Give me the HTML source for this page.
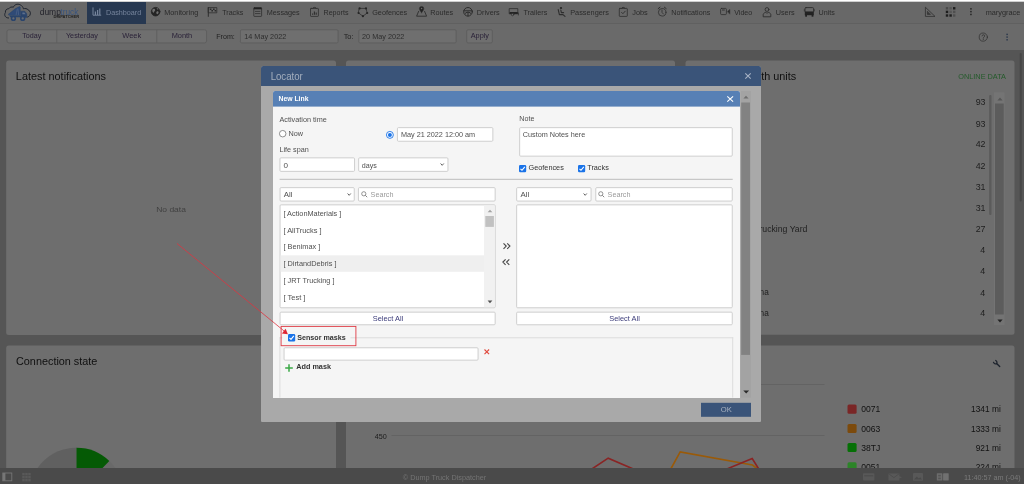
<!DOCTYPE html>
<html lang="en">
<head>
<meta charset="utf-8">
<title>Dump Truck Dispatcher - Locator - New Link</title>
<style>
html,body{margin:0;padding:0;overflow:hidden;}
body{width:1024px;height:484px;overflow:hidden;position:relative;background:#555555;font-family:"Liberation Sans",sans-serif;}
.a{position:absolute;box-sizing:border-box;}
.t{position:absolute;white-space:nowrap;line-height:1;}
.panel{background:#6e6e6e;border-radius:2.5px;}
.tin{background:#6f6f6f;border:1px solid #5c5c5c;border-radius:1.5px;}
.in{background:#fff;border:1px solid #cfcfcf;border-radius:1.5px;}
svg{position:absolute;overflow:visible;}
svg.txt{will-change:transform;}
</style>
</head>
<body>
<!-- page chrome (dimmed) -->
<svg style="left:-1px;top:-1px" width="1026" height="3"><rect x="1.00" y="1.00" width="1024.00" height="1.00" fill="#fff"/></svg>
<svg style="left:-1px;top:0px" width="1026" height="3"><rect x="1.00" y="1.00" width="1024.00" height="1.00" fill="#cfcfcf"/></svg>
<div class="a" id="topbar" style="left:0;top:2px;width:1024px;height:22px;background:#686868;border-bottom:1px solid #606060"></div>
<div class="a" id="tab" style="left:87px;top:2px;width:59px;height:21.5px;background:#273851"></div>
<div class="a" id="toolbar" style="left:0;top:24px;width:1024px;height:25.6px;background:#6a6a6a"></div>
<svg style="left:5px;top:28px" width="203" height="17"><rect x="1.95" y="1.75" width="199.60" height="13.20" rx="2.00" fill="#6f6f6f" stroke="#5c5c5c" stroke-width="0.9"/></svg>
<svg style="left:55px;top:28px" width="4" height="16"><rect x="1.40" y="1.80" width="0.80" height="13.00" fill="#5c5c5c"/></svg>
<svg style="left:105px;top:28px" width="4" height="16"><rect x="1.40" y="1.80" width="0.80" height="13.00" fill="#5c5c5c"/></svg>
<svg style="left:155px;top:28px" width="4" height="16"><rect x="1.40" y="1.80" width="0.80" height="13.00" fill="#5c5c5c"/></svg>
<svg style="left:239px;top:28px" width="101" height="17"><rect x="1.45" y="1.75" width="97.60" height="13.20" rx="1.20" fill="#6f6f6f" stroke="#5c5c5c" stroke-width="0.9"/></svg>
<svg style="left:357px;top:28px" width="101" height="17"><rect x="1.85" y="1.75" width="97.30" height="13.20" rx="1.20" fill="#6f6f6f" stroke="#5c5c5c" stroke-width="0.9"/></svg>
<svg style="left:465px;top:28px" width="29" height="17"><rect x="1.70" y="1.75" width="25.60" height="13.20" rx="1.20" fill="#6f6f6f" stroke="#5c5c5c" stroke-width="0.9"/></svg>
<!-- nav icons -->
<svg style="left:0;top:0" width="1024" height="52" viewBox="0 0 1024 52" fill="none" stroke="#2e2e2e" stroke-width="0.8" stroke-linejoin="round" stroke-linecap="round">
 <!-- logo: cloud + dump truck -->
 <path d="M8.6 18 C5.6 18.2 3.6 15.2 5.4 12.6 C5 10.2 6.8 8.6 8.6 8.8 C9.6 7.2 11.8 6.6 13.4 7.2 C14.2 4.6 17.6 3.4 20.2 4.8 C22.2 5.8 23.2 7.4 23.4 8.8 C25 8.2 27.2 8.6 28 9.8 C30.4 10.6 31 13.6 29.8 15.4 C29.2 16.4 28.4 16.8 27.6 17" stroke="#20252f" stroke-width="1"/>
 <path d="M8.4 14.3 L15.6 8.6 L19.6 6.6 L20.2 7 L20.2 15.6 L10.2 15.6 Z" fill="#2f4a76" stroke="#2a446c" stroke-width="0.6"/>
 <path d="M17.2 9 L16.2 14.6 M18 9 L18.6 14.6" stroke="#5a6f90" stroke-width="0.5"/>
 <path d="M20.8 11.2 L24.8 11.2 L26.8 13.8 L26.8 17.4 L20.8 17.4 Z" fill="#2a446c" stroke="#2a446c" stroke-width="0.5"/>
 <path d="M22.4 12.4 L24.4 12.4 L25.6 14.2 L22.4 14.2 Z" fill="#5d6f8c" stroke="none"/>
 <path d="M10.4 16.6 H21" stroke="#2a446c" stroke-width="1.4"/>
 <circle cx="13.4" cy="18.4" r="1.9" fill="#676c74" stroke="#2a446c" stroke-width="1.5"/>
 <circle cx="22.7" cy="18.4" r="1.9" fill="#676c74" stroke="#2a446c" stroke-width="1.5"/>
 <!-- dashboard -->
 <g stroke="#76849c" stroke-width="1">
  <path d="M93 7.8 V15.2 H100.8"/>
  <path d="M95.4 15 V11.6 M97.6 15 V10 M99.8 15 V8.4" stroke-width="1.2" stroke-linecap="butt"/>
 </g>
 <!-- monitoring globe -->
 <circle cx="155.6" cy="11.7" r="4.3" fill="#242424" stroke="#242424" stroke-width="0.8"/>
 <path d="M152.6 9.2 C153.6 8.2 155 8.6 155.2 9.8 C155.4 10.8 154.2 11.2 154 12.2 C153.6 13.2 152.8 12.6 152.4 11.6 C152.2 10.8 152.2 9.8 152.6 9.2 Z M156.8 11.6 C157.8 11 158.8 11.6 158.6 12.8 C158.2 14 157.2 14.6 156.6 13.8 C156.2 13 156.2 12.2 156.8 11.6 Z M156.6 8.2 C157.4 8 158.2 8.6 158.4 9.4 C157.8 9.8 156.8 9.4 156.6 8.2Z" fill="#707070" stroke="none"/>
 <!-- tracks flag -->
 <path d="M208.3 7.4 V16.4" stroke-width="1"/>
 <rect x="208.6" y="7.6" width="8.2" height="5.2" stroke-width="0.8"/>
 <path d="M209.8 8.4 h1.6 v1.6 h-1.6z M213 8.4 h1.6 v1.6 h-1.6z M211.4 10 h1.6 v1.6 h-1.6z M214.6 10 h1.6 v1.6 h-1.6z" fill="#2a2a2a" stroke="none"/>
 <!-- messages -->
 <rect x="253.8" y="7.6" width="7.8" height="8.8" rx="0.6"/>
 <rect x="253.8" y="7.6" width="7.8" height="1.7" fill="#222" stroke="none"/>
 <path d="M255.4 11.4 H260 M255.4 13.6 H260" stroke-width="0.8"/>
 <!-- reports -->
 <rect x="310.5" y="8.4" width="7.9" height="8" rx="0.6"/>
 <path d="M312.8 8.2 C312.8 7 316.2 7 316.2 8.2" stroke-width="1"/>
 <path d="M312.6 14.8 V13.4 M314.4 14.8 V11.4 M316.2 14.8 V12.6" stroke-width="1.1" stroke-linecap="butt"/>
 <!-- geofences -->
 <path d="M359.6 8.4 L366 8.4 L367.2 13 L362.9 16.2 L358.6 13 Z" stroke-width="0.8"/>
 <g fill="#262626" stroke="none"><circle cx="359.6" cy="8.4" r="1.1"/><circle cx="366" cy="8.4" r="1.1"/><circle cx="367.2" cy="13" r="1.1"/><circle cx="362.9" cy="16.2" r="1.1"/><circle cx="358.6" cy="13" r="1.1"/></g>
 <!-- routes -->
 <path d="M418.6 11.4 L416.6 16.2 H426.6 L424.6 11.4" stroke-width="0.9"/>
 <path d="M421.6 12.8 C420.4 11 419.4 10 419.4 8.6 A2.2 2.2 0 0 1 423.8 8.6 C423.8 10 422.8 11 421.6 12.8 Z" fill="#242424" stroke-width="0.5"/>
 <circle cx="421.6" cy="8.5" r="0.8" fill="#6c6c6c" stroke="none"/>
 <!-- drivers -->
 <circle cx="468" cy="11.8" r="4.3" stroke-width="1"/>
 <path d="M463.8 10.8 H472.2 M465.2 13.4 L467 12.2 H469 L470.8 13.4 M468 12.4 V16" stroke-width="1"/>
 <!-- trailers -->
 <path d="M509.6 8.6 H517.8 V13.8 H509.6 Z" stroke-width="0.8"/>
 <path d="M509.6 12 H517.8 V14 H509.6 Z" fill="#242424" stroke="none"/>
 <path d="M518.4 13 V15" stroke-width="0.8"/>
 <circle cx="512.6" cy="14.6" r="1.2" fill="#6c6c6c" stroke-width="0.7"/>
 <!-- passengers -->
 <circle cx="561" cy="8" r="1.1" fill="#242424" stroke="none"/>
 <path d="M558.2 9.6 L559.4 14.6 H563 L565 16.4 M560.8 10 L561.4 12.6 H563.6" stroke-width="1.1"/>
 <!-- jobs -->
 <rect x="619.3" y="8.4" width="8" height="8" rx="0.6"/>
 <path d="M621.6 8.2 C621.6 7 625 7 625 8.2" stroke-width="1"/>
 <path d="M621.6 12.4 L622.9 13.7 L625.2 11.2" stroke-width="0.9"/>
 <!-- notifications alarm clock -->
 <circle cx="662.2" cy="12.3" r="3.8" stroke-width="0.8"/>
 <path d="M658.2 8.6 L660 7.2 M666.2 8.6 L664.4 7.2" stroke-width="1"/>
 <path d="M662 10 V12.4 L663.4 14" stroke-width="0.8"/>
 <!-- video -->
 <rect x="720.6" y="8.4" width="5.8" height="6.2" rx="1"/>
 <path d="M722.4 10 H724.4" stroke-width="0.9"/>
 <path d="M727.6 11.4 L729.8 9.4 V13.8 Z" fill="#2a2a2a" stroke-width="0.5"/>
 <!-- users -->
 <circle cx="767" cy="9.5" r="1.9" stroke-width="0.9"/>
 <path d="M763.2 16.4 V14.6 C763.2 13.2 765 12.6 765.8 12.2 L767 13.4 L768.2 12.2 C769 12.6 770.8 13.2 770.8 14.6 V16.4 Z" stroke-width="0.9"/>
 <!-- units bus -->
 <rect x="805" y="7.6" width="8.6" height="4.6" rx="1" stroke-width="0.9"/>
 <rect x="804.8" y="11.6" width="9" height="3.6" fill="#222" stroke="none"/>
 <rect x="805.2" y="14.8" width="1.8" height="1.9" fill="#222" stroke="none"/><rect x="811.6" y="14.8" width="1.8" height="1.9" fill="#222" stroke="none"/>
 <path d="M804.3 9.6 V11 M814.3 9.6 V11" stroke-width="0.7"/>
 <!-- ruler triangle -->
 <path d="M925.4 7.6 V16.4 H934.6 Z" stroke-width="0.8"/>
 <path d="M927.4 11.6 V14.4 H930.2 Z" stroke-width="0.6" fill="#3a3a3a"/>
 <!-- apps grid -->
 <g fill="#1e1e1e" stroke="none">
  <rect x="945.8" y="7.1" width="2.4" height="2.4" fill="#4a4a4a"/><rect x="949.4" y="7.1" width="2.4" height="2.4" fill="#555"/><rect x="953" y="7.1" width="2.4" height="2.4"/>
  <rect x="945.8" y="10.7" width="2.4" height="2.4"/><rect x="949.4" y="10.7" width="2.4" height="2.4" fill="#555"/><rect x="953" y="10.7" width="2.4" height="2.4" fill="#4f4f4f"/>
  <rect x="945.8" y="14.3" width="2.4" height="2.4"/><rect x="949.4" y="14.3" width="2.4" height="2.4"/><rect x="953" y="14.3" width="2.4" height="2.4" fill="#4f4f4f"/>
 </g>
 <!-- kebab menus -->
 <g fill="#242424" stroke="none"><rect x="970.2" y="8.1" width="1.5" height="1.5"/><rect x="970.2" y="10.9" width="1.5" height="1.5"/><rect x="970.2" y="13.7" width="1.5" height="1.5"/></g>
 <g fill="#263449" stroke="none"><rect x="1006.4" y="33.7" width="1.4" height="1.4"/><rect x="1006.4" y="36.4" width="1.4" height="1.4"/><rect x="1006.4" y="39.1" width="1.4" height="1.4"/></g>
 <!-- help -->
 <circle cx="983.3" cy="37.1" r="4.1" stroke-width="0.7" stroke="#2e2e2e"/>
 <path d="M982 35.9 C982 34.4 984.7 34.4 984.7 35.9 C984.7 36.9 983.3 36.9 983.3 38.1 M983.3 39.2 V39.5" stroke-width="0.8" stroke="#2e2e2e"/>
</svg>

<!-- dashboard panels -->
<svg style="left:5px;top:59px" width="332" height="277"><rect x="1.20" y="1.50" width="329.80" height="274.50" rx="2.50" fill="#6e6e6e"/></svg>
<svg style="left:345px;top:59px" width="331" height="277"><rect x="1.00" y="1.50" width="329.00" height="274.50" rx="2.50" fill="#6e6e6e"/></svg>
<svg style="left:684px;top:59px" width="332" height="277"><rect x="1.50" y="1.50" width="329.00" height="274.20" rx="2.50" fill="#6e6e6e"/></svg>
<svg style="left:5px;top:344px" width="332" height="163"><rect x="1.20" y="1.40" width="329.80" height="160.00" rx="2.50" fill="#6e6e6e"/></svg>
<svg style="left:345px;top:344px" width="671" height="163"><rect x="1.00" y="1.40" width="668.50" height="160.00" rx="2.50" fill="#6e6e6e"/></svg>
<svg style="left:1018px;top:52px" width="5" height="151"><rect x="1.70" y="1.00" width="2.00" height="148.50" rx="1.00" fill="#474747"/></svg>
<!-- geofence list widgets -->
<svg style="left:988px;top:94px" width="5" height="122"><rect x="1.10" y="1.00" width="2.40" height="120.00" rx="1.00" fill="#5b5b5b"/></svg>
<svg style="left:993px;top:91px" width="13" height="236"><rect x="1.00" y="1.30" width="10.50" height="232.80" fill="#747474"/></svg>
<svg style="left:994px;top:102px" width="11" height="214"><rect x="1.00" y="1.50" width="8.70" height="211.00" fill="#5c5c5c"/></svg>
<svg style="left:996.5px;top:96.5px" width="6" height="4" viewBox="0 0 6 4"><path d="M0.4 3.4 L3 0.6 L5.6 3.4Z" fill="#565656"/></svg>
<svg style="left:996.5px;top:318.7px" width="6" height="4" viewBox="0 0 6 4"><path d="M0.4 0.6 L3 3.4 L5.6 0.6Z" fill="#222"/></svg>
<!-- chart -->
<svg style="left:390px;top:383px" width="436" height="3"><rect x="1.50" y="1.00" width="433.00" height="1.00" fill="#636363"/></svg>
<svg style="left:390px;top:434px" width="436" height="3"><rect x="1.50" y="1.00" width="433.00" height="1.00" fill="#636363"/></svg>
<svg style="left:0;top:0" width="1024" height="484" viewBox="0 0 1024 484">
 <polyline points="578.3,478 608.2,458.2 654.3,478" fill="none" stroke="#8a2424" stroke-width="1.6"/>
 <polyline points="664.7,480 680.2,451.9 752.5,465 769,478" fill="none" stroke="#9a5a08" stroke-width="1.6"/>
 <polyline points="705.1,478 752.2,458.6 764.4,478" fill="none" stroke="#8a2424" stroke-width="1.6"/>
 <!-- wrench -->
 <path d="M999.7 366.5 L996.6 363.6" stroke="#1e242e" stroke-width="1.4" stroke-linecap="round" fill="none"/>
 <path d="M993.5 362.3 C994 363.6 995.4 364.3 996.6 363.7 C997.4 362.6 996.9 361.2 995.7 360.5" stroke="#1e242e" stroke-width="1.25" fill="none" stroke-linecap="round"/>
 <!-- donut -->
 <circle cx="76.5" cy="494.9" r="47.2" fill="#696969"/>
 <path d="M76.5 494.9 L76.5 447.7 A47.2 47.2 0 0 0 29.3 494.9Z" fill="#606060"/>
 <path d="M76.5 494.9 L76.5 447.7 A47.2 47.2 0 0 1 109.3 460.95Z" fill="#055a05"/>
</svg>
<!-- legend squares -->
<svg style="left:846px;top:403px" width="12" height="12"><rect x="1.50" y="1.60" width="9.10" height="9.10" rx="1.50" fill="#7a2626"/></svg>
<svg style="left:846px;top:422px" width="12" height="12"><rect x="1.50" y="1.90" width="9.10" height="9.10" rx="1.50" fill="#7c4a0c"/></svg>
<svg style="left:846px;top:442px" width="12" height="12"><rect x="1.50" y="1.00" width="9.10" height="9.10" rx="1.50" fill="#067006"/></svg>
<svg style="left:846px;top:461px" width="12" height="12"><rect x="1.50" y="1.20" width="9.10" height="9.10" rx="1.50" fill="#2c8428"/></svg>
<svg class="txt" style="left:0;top:0" width="1024" height="484" viewBox="0 0 1024 484" font-family="'Liberation Sans', sans-serif">
<text id="n0" y="15.00" font-size="7.60" fill="#76849c" x="105.98" textLength="35.28" lengthAdjust="spacingAndGlyphs">Dashboard</text>
<text id="n1" y="15.00" font-size="7.60" fill="#2b2b2b" x="164.23" textLength="34.03" lengthAdjust="spacingAndGlyphs">Monitoring</text>
<text id="n2" y="15.00" font-size="7.60" fill="#2b2b2b" x="222.23" textLength="21.03" lengthAdjust="spacingAndGlyphs">Tracks</text>
<text id="n3" y="15.00" font-size="7.60" fill="#2b2b2b" x="266.73" textLength="33.03" lengthAdjust="spacingAndGlyphs">Messages</text>
<text id="n4" y="15.00" font-size="7.60" fill="#2b2b2b" x="323.48" textLength="25.03" lengthAdjust="spacingAndGlyphs">Reports</text>
<text id="n5" y="15.00" font-size="7.60" fill="#2b2b2b" x="372.23" textLength="35.03" lengthAdjust="spacingAndGlyphs">Geofences</text>
<text id="n6" y="15.00" font-size="7.60" fill="#2b2b2b" x="430.23" textLength="23.03" lengthAdjust="spacingAndGlyphs">Routes</text>
<text id="n7" y="15.00" font-size="7.60" fill="#2b2b2b" x="476.73" textLength="23.03" lengthAdjust="spacingAndGlyphs">Drivers</text>
<text id="n8" y="15.00" font-size="7.60" fill="#2b2b2b" x="523.48" textLength="23.78" lengthAdjust="spacingAndGlyphs">Trailers</text>
<text id="n9" y="15.00" font-size="7.60" fill="#2b2b2b" x="570.23" textLength="38.78" lengthAdjust="spacingAndGlyphs">Passengers</text>
<text id="n10" y="15.00" font-size="7.60" fill="#2b2b2b" x="632.23" textLength="15.53" lengthAdjust="spacingAndGlyphs">Jobs</text>
<text id="n11" y="15.00" font-size="7.60" fill="#2b2b2b" x="671.23" textLength="39.03" lengthAdjust="spacingAndGlyphs">Notifications</text>
<text id="n12" y="15.00" font-size="7.60" fill="#2b2b2b" x="734.23" textLength="18.03" lengthAdjust="spacingAndGlyphs">Video</text>
<text id="n13" y="15.00" font-size="7.60" fill="#2b2b2b" x="775.73" textLength="19.03" lengthAdjust="spacingAndGlyphs">Users</text>
<text id="n14" y="15.00" font-size="7.60" fill="#2b2b2b" x="818.48" textLength="16.28" lengthAdjust="spacingAndGlyphs">Units</text>
<text id="n15" y="15.00" font-size="7.60" fill="#2b2b2b" x="985.73" textLength="34.53" lengthAdjust="spacingAndGlyphs">marygrace</text>
<text id="lg1" y="14.50" font-size="8.60" fill="#24242c" x="39.70" textLength="21.20" lengthAdjust="spacingAndGlyphs">dump</text>
<text id="lg2" y="14.50" font-size="8.60" fill="#38547f" x="60.30" textLength="18.20" lengthAdjust="spacingAndGlyphs">truck</text>
<text id="lg3" y="18.40" font-size="3.70" fill="#1c1c1c" font-weight="700" x="53.47" textLength="25.66" lengthAdjust="spacingAndGlyphs">DISPATCHER</text>
<text id="b0" y="37.75" font-size="7.80" fill="#2a2238" x="22.23" textLength="19.05" lengthAdjust="spacingAndGlyphs">Today</text>
<text id="b1" y="37.75" font-size="7.80" fill="#2a2238" x="65.98" textLength="31.80" lengthAdjust="spacingAndGlyphs">Yesterday</text>
<text id="b2" y="37.75" font-size="7.80" fill="#2a2238" x="122.23" textLength="19.05" lengthAdjust="spacingAndGlyphs">Week</text>
<text id="b3" y="37.75" font-size="7.80" fill="#2a2238" x="171.63" textLength="20.55" lengthAdjust="spacingAndGlyphs">Month</text>
<text id="b4" y="38.60" font-size="7.80" fill="#222" x="216.23" textLength="18.55" lengthAdjust="spacingAndGlyphs">From:</text>
<text id="b5" y="38.60" font-size="7.80" fill="#2e2e2e" x="244.23" textLength="42.05" lengthAdjust="spacingAndGlyphs">14 May 2022</text>
<text id="b6" y="38.60" font-size="7.80" fill="#222" x="343.63" textLength="9.95" lengthAdjust="spacingAndGlyphs">To:</text>
<text id="b7" y="38.60" font-size="7.80" fill="#2e2e2e" x="362.03" textLength="42.25" lengthAdjust="spacingAndGlyphs">20 May 2022</text>
<text id="b8" y="37.75" font-size="7.80" fill="#2a2238" x="470.73" textLength="18.30" lengthAdjust="spacingAndGlyphs">Apply</text>
<text id="p1" y="79.75" font-size="10.80" fill="#101010" x="15.87" textLength="90.11" lengthAdjust="spacingAndGlyphs">Latest notifications</text>
<text id="p1n" y="211.60" font-size="7.90" fill="#414141" x="156.22" textLength="29.65" lengthAdjust="spacingAndGlyphs">No data</text>
<text id="p3" y="79.75" font-size="10.80" fill="#101010" x="695.37" textLength="100.81" lengthAdjust="spacingAndGlyphs">Geofences with units</text>
<text id="p3o" y="78.75" font-size="7.40" fill="#235a2a" x="958.24" textLength="47.77" lengthAdjust="spacingAndGlyphs">ONLINE DATA</text>
<text id="p4" y="364.80" font-size="10.80" fill="#101010" x="16.02" textLength="81.36" lengthAdjust="spacingAndGlyphs">Connection state</text>
<text id="g0" y="105.00" font-size="8.90" fill="#1e1e1e" x="975.69" textLength="9.87" lengthAdjust="spacingAndGlyphs">93</text>
<text id="g1" y="126.60" font-size="8.90" fill="#1e1e1e" x="975.69" textLength="9.87" lengthAdjust="spacingAndGlyphs">93</text>
<text id="g2" y="147.40" font-size="8.90" fill="#1e1e1e" x="975.69" textLength="9.87" lengthAdjust="spacingAndGlyphs">42</text>
<text id="g3" y="168.50" font-size="8.90" fill="#1e1e1e" x="975.69" textLength="9.87" lengthAdjust="spacingAndGlyphs">42</text>
<text id="g4" y="189.50" font-size="8.90" fill="#1e1e1e" x="975.69" textLength="9.87" lengthAdjust="spacingAndGlyphs">31</text>
<text id="g5" y="210.90" font-size="8.90" fill="#1e1e1e" x="975.69" textLength="9.87" lengthAdjust="spacingAndGlyphs">31</text>
<text id="g6" y="231.90" font-size="8.90" fill="#1e1e1e" x="975.69" textLength="9.87" lengthAdjust="spacingAndGlyphs">27</text>
<text id="g7" y="252.90" font-size="8.90" fill="#1e1e1e" x="980.34">4</text>
<text id="g8" y="274.40" font-size="8.90" fill="#1e1e1e" x="980.34">4</text>
<text id="g9" y="295.50" font-size="8.90" fill="#1e1e1e" x="980.34">4</text>
<text id="g10" y="316.40" font-size="8.90" fill="#1e1e1e" x="980.34">4</text>
<text id="gy" y="231.90" font-size="8.70" fill="#222" x="807.40" text-anchor="end" textLength="70.83" lengthAdjust="spacingAndGlyphs">JRT Trucking Yard</text>
<text id="gn1" y="295.10" font-size="8.70" fill="#222" x="768.80" text-anchor="end" textLength="25.23" lengthAdjust="spacingAndGlyphs">Marina</text>
<text id="gn2" y="316.10" font-size="8.70" fill="#222" x="768.80" text-anchor="end" textLength="25.23" lengthAdjust="spacingAndGlyphs">Marina</text>
<text id="c450" y="438.70" font-size="7.60" fill="#1c1c1c" x="374.63" textLength="12.03" lengthAdjust="spacingAndGlyphs">450</text>
<text id="la0" y="412.10" font-size="8.80" fill="#121212" x="861.29" textLength="19.02" lengthAdjust="spacingAndGlyphs">0071</text>
<text id="lb0" y="412.10" font-size="8.80" fill="#121212" x="1000.81" text-anchor="end" textLength="29.73" lengthAdjust="spacingAndGlyphs">1341 mi</text>
<text id="la1" y="431.50" font-size="8.80" fill="#121212" x="861.29" textLength="19.02" lengthAdjust="spacingAndGlyphs">0063</text>
<text id="lb1" y="431.50" font-size="8.80" fill="#121212" x="1000.81" text-anchor="end" textLength="29.73" lengthAdjust="spacingAndGlyphs">1333 mi</text>
<text id="la2" y="450.50" font-size="8.80" fill="#121212" x="861.29" textLength="19.02" lengthAdjust="spacingAndGlyphs">38TJ</text>
<text id="lb2" y="450.50" font-size="8.80" fill="#121212" x="1000.81" text-anchor="end" textLength="25.09" lengthAdjust="spacingAndGlyphs">921 mi</text>
<text id="la3" y="469.60" font-size="8.80" fill="#121212" x="861.29" textLength="19.02" lengthAdjust="spacingAndGlyphs">0051</text>
<text id="lb3" y="469.60" font-size="8.80" fill="#121212" x="1000.81" text-anchor="end" textLength="25.09" lengthAdjust="spacingAndGlyphs">224 mi</text>
</svg>
<!-- footer bar -->
<div class="a" id="footer" style="left:0;top:467.7px;width:1024px;height:16.3px;background:#4a4a4a"></div>
<svg style="left:0;top:466px" width="1024" height="18" viewBox="0 466 1024 18" fill="none">
 <rect x="2.8" y="473" width="9" height="7.8" stroke="#767676" stroke-width="0.9"/>
 <rect x="2.8" y="473" width="2.6" height="7.8" fill="#767676"/>
 <g fill="#595959"><rect x="22.2" y="472.9" width="2.5" height="2.5"/><rect x="25.2" y="472.9" width="2.5" height="2.5"/><rect x="28.2" y="472.9" width="2.5" height="2.5"/><rect x="22.2" y="475.9" width="2.5" height="2.5"/><rect x="25.2" y="475.9" width="2.5" height="2.5"/><rect x="28.2" y="475.9" width="2.5" height="2.5"/><rect x="22.2" y="478.9" width="2.5" height="2.5"/><rect x="25.2" y="478.9" width="2.5" height="2.5"/><rect x="28.2" y="478.9" width="2.5" height="2.5"/></g>
 <g fill="#585858">
  <rect x="863" y="473.2" width="11.4" height="7.4" rx="0.8"/>
  <path d="M888.4 473.4 H899.4 V480.4 H888.4 Z M899.4 476.2 L902 477.2 L899.4 478.4Z"/>
  <rect x="913" y="473" width="10" height="7.8" rx="0.8"/>
 </g>
 <path d="M864.2 475.8 H873.2" stroke="#4a4a4a" stroke-width="0.9"/>
 <path d="M888.8 473.8 L893.9 477.6 L899 473.8" stroke="#4a4a4a" stroke-width="0.8"/>
 <path d="M914 479.6 L916.8 476.4 L918.8 478.4 L920.2 477.2 L922 479.6Z" fill="#4a4a4a"/>
 <rect x="936.8" y="473.2" width="5.6" height="7.4" rx="0.6" fill="#6c6c6c"/><rect x="943.1" y="473.2" width="5.6" height="7.4" rx="0.6" fill="#707070"/>
 <rect x="938.2" y="474.8" width="2.6" height="1.6" fill="#555"/><rect x="938.2" y="477.6" width="2.6" height="1.6" fill="#555"/>
</svg>

<svg class="txt" style="left:0;top:0" width="1024" height="484" viewBox="0 0 1024 484" font-family="'Liberation Sans', sans-serif">
<text id="f1" y="479.90" font-size="7.40" fill="#747474" x="402.74" textLength="83.52" lengthAdjust="spacingAndGlyphs">© Dump Truck Dispatcher</text>
<text id="f2" y="479.90" font-size="7.40" fill="#7a7a7a" x="963.94" textLength="56.82" lengthAdjust="spacingAndGlyphs">11:40:57 am (-04)</text>
</svg>
<!-- Locator dialog (dimmed by second overlay) -->
<div class="a" id="locator" style="left:261px;top:66px;width:500px;height:355.5px;background:#a9a9a9;border-radius:2.5px 2.5px 1px 1px"></div>
<div class="a" style="left:261px;top:66px;width:500px;height:19.6px;background:#3a5479;border-radius:2.5px 2.5px 0 0"></div>
<svg style="left:744.7px;top:73.4px" width="6" height="6" viewBox="0 0 6 6"><path d="M0.3 0.3 L5.7 5.7 M5.7 0.3 L0.3 5.7" stroke="#a9b4c6" stroke-width="1.05" fill="none"/></svg>
<svg style="left:740px;top:90px" width="12" height="309"><rect x="1.00" y="1.00" width="10.00" height="306.60" fill="#a3a3a3"/></svg>
<svg style="left:740px;top:101px" width="11" height="255"><rect x="1.20" y="1.50" width="8.80" height="252.40" fill="#828282"/></svg>
<svg style="left:742.8px;top:95.2px" width="6" height="4" viewBox="0 0 6 4"><path d="M0.4 3.4 L3 0.8 L5.6 3.4Z" fill="#6e6e6e"/></svg>
<svg style="left:742.6px;top:389.8px" width="6.4" height="4" viewBox="0 0 6.4 4"><path d="M0.3 0.5 L3.2 3.6 L6.1 0.5Z" fill="#2a2a2a"/></svg>
<svg style="left:700px;top:401px" width="52" height="17"><rect x="1.00" y="1.80" width="50.00" height="14.00" fill="#3a5479"/></svg>
<!-- New Link dialog -->
<div class="a" id="newlink" style="left:273px;top:91px;width:467px;height:306.6px;background:#f5f5f5;border-radius:2px 2px 0 0;overflow:hidden">
 <svg style="left:-1px;top:-1px" width="469" height="18"><rect x="1.00" y="1.00" width="467.00" height="15.60" fill="#5780b5"/></svg>
</div>
<svg style="left:726.8px;top:96.2px" width="6.4" height="6" viewBox="0 0 6.4 6"><path d="M0.3 0.3 L6.1 5.7 M6.1 0.3 L0.3 5.7" stroke="#fff" stroke-width="1.1" fill="none"/></svg>
<!-- form controls -->
<svg style="left:279.3px;top:130.3px" width="7.4" height="7.4" viewBox="0 0 7.4 7.4"><circle cx="3.7" cy="3.7" r="3.25" fill="#fff" stroke="#757575" stroke-width="0.8"/></svg>
<svg style="left:386px;top:130.9px" width="7.8" height="7.8" viewBox="0 0 7.8 7.8"><circle cx="3.9" cy="3.9" r="3.45" fill="#fff" stroke="#1a73e8" stroke-width="0.9"/><circle cx="3.9" cy="3.9" r="2" fill="#1a73e8"/></svg>
<svg style="left:396px;top:126px" width="99" height="17"><rect x="1.45" y="1.65" width="95.40" height="13.60" rx="1.00" fill="#fff" stroke="#c9c9c9" stroke-width="0.9"/></svg>
<svg style="left:278px;top:156px" width="78" height="17"><rect x="1.95" y="1.85" width="74.60" height="13.50" rx="1.00" fill="#fff" stroke="#c9c9c9" stroke-width="0.9"/></svg>
<svg style="left:357px;top:156px" width="93" height="17"><rect x="1.65" y="1.85" width="89.30" height="13.50" rx="1.00" fill="#fff" stroke="#c9c9c9" stroke-width="0.9"/></svg>
<svg style="left:439.8px;top:163.2px" width="4.4" height="3" viewBox="0 0 4.4 3"><path d="M0.6 0.5 L2.2 2.3 L3.8 0.5" stroke="#484848" stroke-width="0.85" fill="none"/></svg>
<svg style="left:518px;top:126px" width="216" height="32"><rect x="1.65" y="1.65" width="212.60" height="28.50" rx="1.00" fill="#fff" stroke="#c9c9c9" stroke-width="0.9"/></svg>
<svg style="left:519.2px;top:164.5px" width="7.2" height="7.3" viewBox="0 0 7.2 7.3"><rect x="0" y="0" width="7.2" height="7.3" rx="1.2" fill="#1a73e8"/><path d="M1.5 3.8 L3 5.3 L5.8 1.9" stroke="#fff" stroke-width="1.1" fill="none"/></svg>
<svg style="left:577.9px;top:164.5px" width="7.2" height="7.3" viewBox="0 0 7.2 7.3"><rect x="0" y="0" width="7.2" height="7.3" rx="1.2" fill="#1a73e8"/><path d="M1.5 3.8 L3 5.3 L5.8 1.9" stroke="#fff" stroke-width="1.1" fill="none"/></svg>
<svg style="left:278px;top:177px" width="456" height="4"><rect x="1.60" y="1.80" width="453.10" height="1.00" fill="#bcbcbc"/></svg>
<!-- left list -->
<svg style="left:278px;top:186px" width="78" height="17"><rect x="2.05" y="1.65" width="74.20" height="13.40" rx="1.00" fill="#fff" stroke="#c9c9c9" stroke-width="0.9"/></svg>
<svg style="left:346.6px;top:192.9px" width="4.4" height="3" viewBox="0 0 4.4 3"><path d="M0.6 0.5 L2.2 2.3 L3.8 0.5" stroke="#484848" stroke-width="0.85" fill="none"/></svg>
<svg style="left:357px;top:186px" width="140" height="17"><rect x="1.45" y="1.65" width="136.70" height="13.40" rx="1.00" fill="#fff" stroke="#c9c9c9" stroke-width="0.9"/></svg>
<svg style="left:361.3px;top:190.6px" width="7" height="7" viewBox="0 0 7 7"><circle cx="2.8" cy="2.8" r="2.1" fill="none" stroke="#777" stroke-width="0.8"/><path d="M4.3 4.3 L6.2 6.2" stroke="#777" stroke-width="0.9"/></svg>
<svg style="left:278px;top:203px" width="219" height="107"><rect x="2.05" y="1.85" width="215.10" height="102.90" rx="1.00" fill="#fff" stroke="#c9c9c9" stroke-width="0.9"/></svg>
<svg style="left:279px;top:254px" width="206" height="19"><rect x="1.60" y="1.30" width="203.40" height="16.50" fill="#efefef"/></svg>
<svg style="left:483px;top:204px" width="13" height="105"><rect x="1.00" y="1.40" width="10.70" height="101.80" fill="#f1f1f1"/></svg>
<svg style="left:484px;top:215px" width="11" height="13"><rect x="1.30" y="1.00" width="8.60" height="10.90" fill="#c1c1c1"/></svg>
<svg style="left:486.6px;top:209.2px" width="6" height="4" viewBox="0 0 6 4"><path d="M0.6 3.2 L3 0.8 L5.4 3.2Z" fill="#a3a3a3"/></svg>
<svg style="left:486.8px;top:300px" width="6" height="4" viewBox="0 0 6 4"><path d="M0.6 0.6 L3 3.2 L5.4 0.6Z" fill="#505050"/></svg>
<svg style="left:278px;top:310px" width="219" height="17"><rect x="2.05" y="2.15" width="215.10" height="12.60" rx="1.00" fill="#fff" stroke="#c9c9c9" stroke-width="0.9"/></svg>
<!-- move buttons -->
<svg style="left:502.7px;top:243px" width="7.8" height="6.2" viewBox="0 0 7.8 6.2"><path d="M0.5 0.4 L3.2 3.1 L0.5 5.8 M4.2 0.4 L6.9 3.1 L4.2 5.8" stroke="#484848" stroke-width="1.15" fill="none"/></svg>
<svg style="left:501.9px;top:258.6px" width="7.8" height="6.2" viewBox="0 0 7.8 6.2"><path d="M3.6 0.4 L0.9 3.1 L3.6 5.8 M7.3 0.4 L4.6 3.1 L7.3 5.8" stroke="#484848" stroke-width="1.15" fill="none"/></svg>
<!-- right list -->
<svg style="left:515px;top:186px" width="78" height="17"><rect x="1.65" y="1.65" width="74.40" height="13.40" rx="1.00" fill="#fff" stroke="#c9c9c9" stroke-width="0.9"/></svg>
<svg style="left:583.3px;top:192.9px" width="4.4" height="3" viewBox="0 0 4.4 3"><path d="M0.6 0.5 L2.2 2.3 L3.8 0.5" stroke="#484848" stroke-width="0.85" fill="none"/></svg>
<svg style="left:594px;top:186px" width="140" height="17"><rect x="1.75" y="1.65" width="136.50" height="13.40" rx="1.00" fill="#fff" stroke="#c9c9c9" stroke-width="0.9"/></svg>
<svg style="left:598.4px;top:190.6px" width="7" height="7" viewBox="0 0 7 7"><circle cx="2.8" cy="2.8" r="2.1" fill="none" stroke="#777" stroke-width="0.8"/><path d="M4.3 4.3 L6.2 6.2" stroke="#777" stroke-width="0.9"/></svg>
<svg style="left:515px;top:203px" width="219" height="107"><rect x="1.65" y="1.85" width="215.60" height="102.90" rx="1.00" fill="#fff" stroke="#c9c9c9" stroke-width="0.9"/></svg>
<svg style="left:515px;top:310px" width="219" height="17"><rect x="1.65" y="2.15" width="215.60" height="12.60" rx="1.00" fill="#fff" stroke="#c9c9c9" stroke-width="0.9"/></svg>
<!-- sensor masks fieldset -->
<svg style="left:278px;top:336px" width="4" height="63"><rect x="1.40" y="1.30" width="1.00" height="60.30" fill="#dcdcdc"/></svg>
<svg style="left:731px;top:336px" width="4" height="63"><rect x="1.20" y="1.30" width="1.00" height="60.30" fill="#dcdcdc"/></svg>
<svg style="left:278px;top:336px" width="6" height="4"><rect x="1.40" y="1.30" width="3.00" height="1.00" fill="#dcdcdc"/></svg>
<svg style="left:349px;top:336px" width="386" height="4"><rect x="1.50" y="1.30" width="382.70" height="1.00" fill="#dcdcdc"/></svg>
<svg style="left:288px;top:334.2px" width="7.2" height="7.4" viewBox="0 0 7.2 7.4"><rect x="0" y="0" width="7.2" height="7.4" rx="1.2" fill="#1a73e8"/><path d="M1.5 3.9 L3 5.4 L5.8 1.9" stroke="#fff" stroke-width="1.1" fill="none"/></svg>
<svg style="left:282px;top:346px" width="198" height="16"><rect x="2.05" y="1.75" width="194.00" height="12.40" rx="1.00" fill="#fff" stroke="#c9c9c9" stroke-width="0.9"/></svg>
<svg style="left:484.3px;top:349.2px" width="5.6" height="5.6" viewBox="0 0 5.6 5.6"><path d="M0.5 0.5 L5.1 5.1 M5.1 0.5 L0.5 5.1" stroke="#e0483c" stroke-width="1.1" fill="none"/></svg>
<svg style="left:284.9px;top:363.5px" width="8" height="8" viewBox="0 0 8 8"><path d="M4 0.2 V7.8 M0.2 4 H7.8" stroke="#3aa845" stroke-width="1.5" fill="none"/></svg>

<svg class="txt" style="left:0;top:0" width="1024" height="484" viewBox="0 0 1024 484" font-family="'Liberation Sans', sans-serif">
<text id="d1" y="79.50" font-size="10.20" fill="#a3aebd" x="270.64" textLength="32.21" lengthAdjust="spacingAndGlyphs">Locator</text>
<text id="d1ok" y="412.20" font-size="7.60" fill="#a8b2c0" x="720.73" textLength="11.03" lengthAdjust="spacingAndGlyphs">OK</text>
<text id="d2" y="101.40" font-size="7.60" fill="#ffffff" font-weight="700" x="278.48" textLength="30.03" lengthAdjust="spacingAndGlyphs">New Link</text>
<text id="a1" y="121.75" font-size="8.10" fill="#505050" x="279.47" textLength="47.32" lengthAdjust="spacingAndGlyphs">Activation time</text>
<text id="a2" y="135.75" font-size="8.10" fill="#505050" x="288.47" textLength="14.57" lengthAdjust="spacingAndGlyphs">Now</text>
<text id="a3" y="137.40" font-size="8.10" fill="#505050" x="400.92" textLength="74.27" lengthAdjust="spacingAndGlyphs">May 21 2022 12:00 am</text>
<text id="a4" y="151.60" font-size="8.10" fill="#505050" x="279.47" textLength="29.32" lengthAdjust="spacingAndGlyphs">Life span</text>
<text id="a5" y="167.50" font-size="8.10" fill="#505050" x="283.42">0</text>
<text id="a6" y="167.50" font-size="8.10" fill="#505050" x="361.72" textLength="15.07" lengthAdjust="spacingAndGlyphs">days</text>
<text id="a7" y="121.00" font-size="8.10" fill="#505050" x="519.32" textLength="15.07" lengthAdjust="spacingAndGlyphs">Note</text>
<text id="a8" y="136.80" font-size="8.10" fill="#505050" x="522.72" textLength="62.57" lengthAdjust="spacingAndGlyphs">Custom Notes here</text>
<text id="a9" y="169.90" font-size="8.10" fill="#333" x="528.52" textLength="35.27" lengthAdjust="spacingAndGlyphs">Geofences</text>
<text id="a10" y="169.90" font-size="8.10" fill="#333" x="587.22" textLength="21.57" lengthAdjust="spacingAndGlyphs">Tracks</text>
<text id="s1" y="196.70" font-size="8.10" fill="#505050" x="283.72" textLength="8.77" lengthAdjust="spacingAndGlyphs">All</text>
<text id="s2" y="196.70" font-size="8.10" fill="#9a9a9a" x="370.62" textLength="22.87" lengthAdjust="spacingAndGlyphs">Search</text>
<text id="s3" y="196.70" font-size="8.10" fill="#505050" x="520.42" textLength="8.77" lengthAdjust="spacingAndGlyphs">All</text>
<text id="s4" y="196.70" font-size="8.10" fill="#9a9a9a" x="607.62" textLength="22.87" lengthAdjust="spacingAndGlyphs">Search</text>
<text id="i0" y="215.80" font-size="8.10" fill="#505050" x="283.42" textLength="57.97" lengthAdjust="spacingAndGlyphs">[ ActionMaterials ]</text>
<text id="i1" y="232.50" font-size="8.10" fill="#505050" x="283.42" textLength="38.17" lengthAdjust="spacingAndGlyphs">[ AllTrucks ]</text>
<text id="i2" y="249.40" font-size="8.10" fill="#505050" x="283.42" textLength="36.87" lengthAdjust="spacingAndGlyphs">[ Benimax ]</text>
<text id="i3" y="266.20" font-size="8.10" fill="#505050" x="283.42" textLength="53.07" lengthAdjust="spacingAndGlyphs">[ DirtandDebris ]</text>
<text id="i4" y="283.20" font-size="8.10" fill="#505050" x="283.42" textLength="51.07" lengthAdjust="spacingAndGlyphs">[ JRT Trucking ]</text>
<text id="i5" y="300.10" font-size="8.10" fill="#505050" x="283.42" textLength="22.07" lengthAdjust="spacingAndGlyphs">[ Test ]</text>
<text id="sa1" y="321.20" font-size="8.10" fill="#3c3c7a" x="372.72" textLength="30.57" lengthAdjust="spacingAndGlyphs">Select All</text>
<text id="sa2" y="321.20" font-size="8.10" fill="#3c3c7a" x="609.22" textLength="30.57" lengthAdjust="spacingAndGlyphs">Select All</text>
<text id="m1" y="340.20" font-size="8.10" fill="#333" font-weight="700" x="297.22" textLength="48.57" lengthAdjust="spacingAndGlyphs">Sensor masks</text>
<text id="m2" y="369.40" font-size="8.10" fill="#333" font-weight="700" x="296.22" textLength="34.77" lengthAdjust="spacingAndGlyphs">Add mask</text>
</svg>
<!-- red annotation -->
<svg style="left:0;top:0" width="1024" height="484" viewBox="0 0 1024 484">
 <line x1="177" y1="243.5" x2="284.5" y2="331.3" stroke="#de3540" stroke-width="0.8"/>
 <path d="M287.9 334.2 L281.9 333.5 L285.6 328.8Z" fill="#e02432"/>
 <rect x="281.1" y="326.4" width="74.8" height="19.3" fill="none" stroke="#de3a44" stroke-width="0.9"/>
</svg>

</body>
</html>
